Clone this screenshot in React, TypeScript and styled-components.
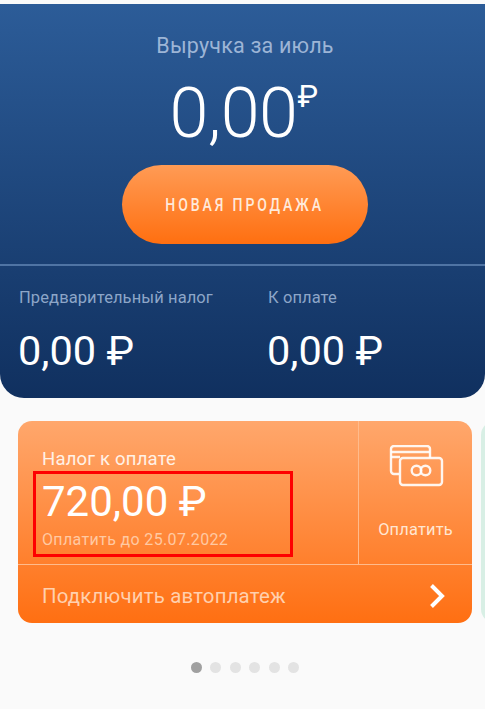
import React, { FC } from 'react';
import styled, { createGlobalStyle } from 'styled-components';

const GlobalStyle = createGlobalStyle`
  html, body {
    margin: 0;
    padding: 0;
    background: #fafafa;
  }
  * {
    box-sizing: border-box;
  }
`;

const CardIcon: FC = () => (
  <svg width="56" height="42" viewBox="0 0 56 42" fill="none" stroke="#fff" strokeOpacity="0.9" strokeWidth="2.4">
    <path d="M11 29H6a3 3 0 0 1-3-3V4a3 3 0 0 1 3-3h33a3 3 0 0 1 3 3v9" />
    <path d="M3 7h39M3 12h9" />
    <rect x="12" y="13" width="42" height="27" rx="3" />
    <circle cx="28.5" cy="25.5" r="4.8" />
    <circle cx="37.5" cy="25.5" r="4.8" />
  </svg>
);

const App: FC = () => {
  const dots = [true, false, false, false, false, false];

  return (
    <Page>
      <GlobalStyle />
      <Hero>
        <HeroTop>
          <HeroTitle>Выручка за июль</HeroTitle>
          <HeroAmount>
            0,00<HeroCurrency>₽</HeroCurrency>
          </HeroAmount>
          <SaleButton>
            <SaleLabel>НОВАЯ ПРОДАЖА</SaleLabel>
          </SaleButton>
        </HeroTop>
        <Stats>
          <Stat>
            <StatLabel>Предварительный налог</StatLabel>
            <StatValue>0,00 ₽</StatValue>
          </Stat>
          <Stat>
            <StatLabel>К оплате</StatLabel>
            <StatValue>0,00 ₽</StatValue>
          </Stat>
        </Stats>
      </Hero>

      <Carousel>
        <TaxCard>
          <TaxTop>
            <TaxInfo>
              <TaxTitle>Налог к оплате</TaxTitle>
              <TaxAmount>720,00 ₽</TaxAmount>
              <TaxDue>Оплатить до 25.07.2022</TaxDue>
              <Highlight />
            </TaxInfo>
            <PayAction>
              <CardIcon />
              <PayLabel>Оплатить</PayLabel>
            </PayAction>
          </TaxTop>
          <AutoPay>
            <AutoPayLabel>Подключить автоплатеж</AutoPayLabel>
            <svg width="16" height="26" viewBox="0 0 16 26" fill="none" stroke="#fff" strokeWidth="4">
              <path d="M2.5 2.5l10.5 10.5-10.5 10.5" />
            </svg>
          </AutoPay>
        </TaxCard>
        <NextCard />
      </Carousel>

      <Dots>
        {dots.map((active, i) => (
          <Dot key={i} $active={active} />
        ))}
      </Dots>
    </Page>
  );
};

export default App;

const Page = styled.div`
  width: 485px;
  height: 709px;
  padding-top: 4px;
  overflow: hidden;
  background: #fafafa;
  font-family: Roboto, 'Noto Sans', sans-serif;
`;

const Hero = styled.div`
  height: 394px;
  background: linear-gradient(180deg, #2c5c98 0%, #10305f 100%);
  border-radius: 0 0 24px 24px;
`;

const HeroTop = styled.div`
  height: 262px;
  display: flex;
  flex-direction: column;
  align-items: center;
  border-bottom: 2px solid #4f74a4;
  padding: 29px 0 0 5px;
`;

const HeroTitle = styled.div`
  height: 26px;
  font-size: 21.5px;
  line-height: 26px;
  letter-spacing: 0.2px;
  color: #9db5d6;
`;

const HeroAmount = styled.div`
  display: flex;
  align-items: flex-start;
  height: 78px;
  margin-top: 15px;
  margin-left: -3px;
  font-size: 70px;
  line-height: 78px;
  font-weight: 300;
  letter-spacing: -0.5px;
  color: #fff;
`;

const HeroCurrency = styled.span`
  font-size: 31px;
  line-height: 46px;
  font-weight: 400;
`;

const SaleButton = styled.button`
  width: 246px;
  height: 79px;
  margin-top: 13px;
  border: none;
  border-radius: 40px;
  padding: 0;
  background: linear-gradient(180deg, #ff9b55 0%, #ff6f10 100%);
  font-family: inherit;
`;

const SaleLabel = styled.span`
  display: inline-block;
  font-size: 18px;
  font-weight: 500;
  letter-spacing: 3.7px;
  color: #ffeadb;
  transform: scaleX(0.78);
  white-space: nowrap;
`;

const Stats = styled.div`
  display: grid;
  grid-template-columns: 249px 1fr;
  padding: 22px 0 0 19px;
`;

const Stat = styled.div`
  display: flex;
  flex-direction: column;
`;

const StatLabel = styled.div`
  font-size: 16.5px;
  line-height: 20px;
  letter-spacing: 0.1px;
  color: #8da6c8;
`;

const StatValue = styled.div`
  margin-top: 20px;
  margin-left: -1px;
  font-size: 41.5px;
  line-height: 46px;
  font-weight: 400;
  color: #fff;
`;

const Carousel = styled.div`
  display: flex;
  gap: 9px;
  height: 202px;
  margin-top: 23px;
  padding-left: 18px;
`;

const TaxCard = styled.div`
  flex: 0 0 454px;
  display: flex;
  flex-direction: column;
  border-radius: 14px;
  background: linear-gradient(180deg, #ffa76c 0%, #ff6f12 100%);
`;

const TaxTop = styled.div`
  display: flex;
  height: 144px;
  border-bottom: 1px solid #ffbb8c;
`;

const TaxInfo = styled.div`
  position: relative;
  flex: 0 0 341px;
  padding: 27px 0 0 24px;
  border-right: 1px solid #ffbb8c;
`;

const TaxTitle = styled.div`
  font-size: 18.5px;
  line-height: 22px;
  letter-spacing: 0.2px;
  color: #fff1e6;
`;

const TaxAmount = styled.div`
  margin-top: 7px;
  font-size: 42px;
  line-height: 50px;
  font-weight: 400;
  color: #fff;
`;

const TaxDue = styled.div`
  margin-top: 3px;
  font-size: 16px;
  line-height: 20px;
  letter-spacing: 0.35px;
  color: #ffc9a2;
`;

const Highlight = styled.div`
  position: absolute;
  left: 15px;
  top: 50px;
  width: 260px;
  height: 86px;
  border: 3px solid #fe0000;
`;

const PayAction = styled.div`
  flex: 1;
  display: flex;
  flex-direction: column;
  align-items: center;
  padding-top: 24px;
`;

const PayLabel = styled.div`
  margin-top: 33px;
  font-size: 16.4px;
  line-height: 20px;
  letter-spacing: 0.2px;
  color: #ffe6d2;
`;

const AutoPay = styled.div`
  flex: 1;
  display: flex;
  align-items: center;
  justify-content: space-between;
  padding: 3px 27px 0 24px;
`;

const AutoPayLabel = styled.div`
  font-size: 20.4px;
  letter-spacing: 0.2px;
  color: #ffd0ae;
`;

const NextCard = styled.div`
  flex: 0 0 40px;
  border-radius: 14px 0 0 14px;
  background: #d8efe5;
`;

const Dots = styled.div`
  display: flex;
  justify-content: center;
  gap: 8.5px;
  margin-top: 39px;
  margin-left: 5px;
`;

const Dot = styled.div<{ $active: boolean }>`
  width: 11px;
  height: 11px;
  border-radius: 50%;
  background: ${({ $active }) => ($active ? '#a0a0a0' : '#e3e3e3')};
`;
